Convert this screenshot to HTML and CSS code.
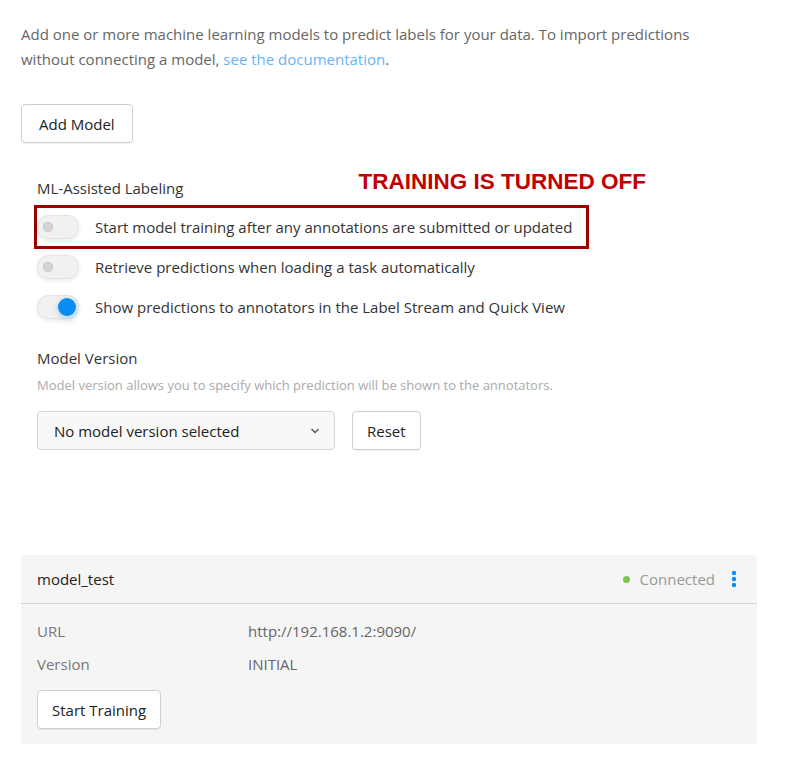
FILE: index.html
```html
<!DOCTYPE html>
<html lang="en">
<head>
    <meta charset="UTF-8">
    <title>Machine Learning</title>
    <link rel="stylesheet" href="styles.css">
</head>
<body>
    <div class="page">
        <p class="intro">
            Add one or more machine learning models to predict labels for your data. To import predictions
            without connecting a model, <a href="#">see the documentation</a>.
        </p>

        <button class="btn add-model">Add Model</button>

        <div class="section">
            <div class="section-head">
                <div class="section-title">ML-Assisted Labeling</div>
                <div class="warning">TRAINING IS TURNED OFF</div>
            </div>

            <div class="toggle-row highlighted">
                <span class="toggle"><span class="knob"></span></span>
                <span>Start model training after any annotations are submitted or updated</span>
            </div>
            <div class="toggle-row">
                <span class="toggle"><span class="knob"></span></span>
                <span>Retrieve predictions when loading a task automatically</span>
            </div>
            <div class="toggle-row">
                <span class="toggle on"><span class="knob"></span></span>
                <span>Show predictions to annotators in the Label Stream and Quick View</span>
            </div>
        </div>

        <div class="section version">
            <div class="section-title">Model Version</div>
            <div class="hint">Model version allows you to specify which prediction will be shown to the annotators.</div>
            <div class="version-controls">
                <div class="select">
                    <span>No model version selected</span>
                    <svg width="10" height="6" viewBox="0 0 10 6"><path d="M1.5 1l3.5 3.5L8.5 1" fill="none" stroke="#555" stroke-width="1.4"/></svg>
                </div>
                <button class="btn reset">Reset</button>
            </div>
        </div>

        <div class="card">
            <div class="card-head">
                <span class="card-title">model_test</span>
                <span class="status"><span class="dot"></span>Connected</span>
                <svg class="kebab" width="6" height="18" viewBox="0 0 6 18">
                    <circle cx="3" cy="3" r="2.2" fill="#0a8cf0"/>
                    <circle cx="3" cy="9" r="2.2" fill="#0a8cf0"/>
                    <circle cx="3" cy="15" r="2.2" fill="#0a8cf0"/>
                </svg>
            </div>
            <div class="card-body">
                <div class="info">
                    <span class="label">URL</span>
                    <span>http://192.168.1.2:9090/</span>
                    <span class="label">Version</span>
                    <span>INITIAL</span>
                </div>
                <button class="btn train">Start Training</button>
            </div>
        </div>
    </div>
</body>
</html>
```

FILE: styles.css
```css
body {
    margin: 0;
    background: #fff;
    font-family: "Open Sans", "Noto Sans", sans-serif;
    color: #333;
}

.page {
    width: 736px;
    padding: 22px 0 0 21px;
}

.intro {
    max-width: 700px;
    margin: 0;
    font-size: 15px;
    line-height: 25px;
    color: #666;
}

.intro a {
    color: #69b3f5;
    text-decoration: none;
}

.btn {
    height: 39px;
    padding: 0 16px;
    border: 1px solid #cfcfcf;
    border-radius: 4px;
    background: #fff;
    font-family: inherit;
    font-size: 15px;
    color: #222;
    box-shadow: 0 1px 1px rgba(0, 0, 0, 0.06);
}

.add-model {
    margin-top: 32px;
    padding: 0 17px;
}

.section {
    padding-left: 16px;
}

.section-head {
    display: flex;
    align-items: flex-end;
    margin-top: 30px;
    height: 25px;
}

.section-title {
    font-size: 15px;
    color: #333;
}

.warning {
    margin-left: 175px;
    margin-bottom: 3px;
    font-family: "Liberation Sans", Arial, sans-serif;
    font-weight: bold;
    font-size: 22.5px;
    color: #c00000;
}

.toggle-row {
    display: flex;
    align-items: center;
    gap: 16px;
    height: 40px;
    font-size: 15px;
    color: #333;
}

.toggle-row.highlighted {
    width: 549px;
    height: 38px;
    margin: 7px 0 -2px -3px;
    border: 3px solid #990000;
}

.toggle {
    position: relative;
    width: 42px;
    height: 24px;
    border-radius: 12px;
    background: #f1f1f1;
    box-shadow: inset 0 0 0 1px #e4e4e4, 0 2px 4px rgba(0, 0, 0, 0.08);
}

.knob {
    position: absolute;
    top: 7px;
    left: 6px;
    width: 10px;
    height: 10px;
    border-radius: 50%;
    background: #d6d6d6;
    box-shadow: inset 0 0 0 1px #c8c8c8;
}

.toggle.on .knob {
    top: 3px;
    left: 21px;
    width: 18px;
    height: 18px;
    background: #0a8cf0;
    box-shadow: 0 2px 6px rgba(10, 140, 240, 0.35);
}

.version {
    margin-top: 21px;
}

.hint {
    margin-top: 8px;
    font-size: 13px;
    color: #aaa;
}

.version-controls {
    display: flex;
    gap: 17px;
    margin-top: 17px;
}

.select {
    display: flex;
    align-items: center;
    justify-content: space-between;
    width: 266px;
    height: 37px;
    padding: 0 14px 0 16px;
    border: 1px solid #d6d6d6;
    border-radius: 4px;
    background: #f8f8f8;
    font-size: 15px;
    color: #222;
}

.reset {
    padding: 0 14px;
}

.card {
    margin-top: 105px;
    border-radius: 4px;
    background: #f5f5f5;
}

.card-head {
    display: flex;
    align-items: center;
    height: 48px;
    padding: 0 20px 0 16px;
    border-bottom: 1px solid #d8d8d8;
    font-size: 15px;
}

.card-title {
    flex: 1;
    color: #222;
}

.status {
    display: flex;
    align-items: center;
    color: #999;
}

.dot {
    width: 7px;
    height: 7px;
    margin-right: 10px;
    border-radius: 50%;
    background: #7cc44a;
}

.kebab {
    margin-left: 16px;
}

.card-body {
    padding: 16px 16px 15px;
}

.info {
    display: grid;
    grid-template-columns: 211px 1fr;
    row-gap: 11px;
    font-size: 15px;
    line-height: 22px;
    color: #666;
}

.info .label {
    color: #777;
}

.card-body .btn {
    margin-top: 15px;
}

.train {
    padding: 0 14px;
}
```
